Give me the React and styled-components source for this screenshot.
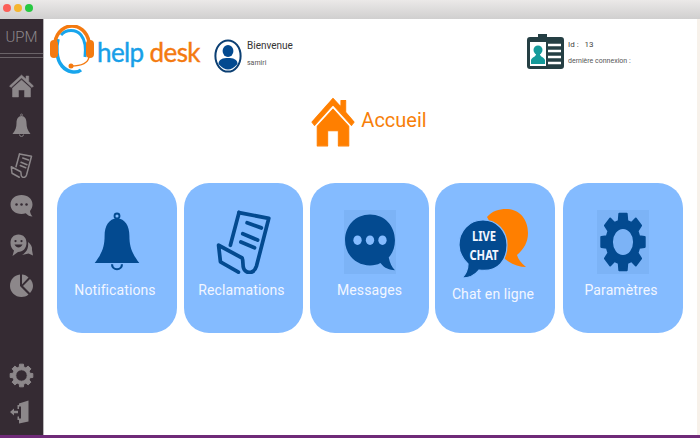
import React from "react";
import styled, { createGlobalStyle } from "styled-components";

const GlobalStyle = createGlobalStyle`
  html, body {
    margin: 0;
    padding: 0;
    background: #fff;
    font-family: "Roboto", "Liberation Sans", sans-serif;
  }
`;

const Desktop = styled.div`
  width: 700px;
  height: 438px;
  overflow: hidden;
  display: flex;
  flex-direction: column;
  background: #f7f1ea;
  border-bottom: 3px solid #6f2a78;
  box-sizing: border-box;
  padding-right: 3px;
`;
const TitleBar = styled.div`
  height: 19px;
  flex: none;
  display: flex;
  align-items: center;
  gap: 3px;
  box-sizing: border-box;
  padding: 0 0 3px 3px;
  margin-right: -3px;
  background: linear-gradient(#ebe9e8, #d0cfcf);
`;
const Dot = styled.span`
  width: 8px;
  height: 8px;
  border-radius: 50%;
  background: ${(p) => p.color};
`;
const Body = styled.div`
  flex: 1;
  display: flex;
  min-height: 0;
`;
const Sidebar = styled.div`
  width: 43px;
  flex: none;
  display: flex;
  flex-direction: column;
  align-items: center;
  background: #352b33;
  border-right: 1px solid #b9b7b9;
`;
const Brand = styled.div`
  height: 34px;
  line-height: 36px;
  font-size: 15px;
  font-weight: 300;
  color: #8d888b;
`;
const Rule = styled.div`
  width: 100%;
  height: 1px;
  margin-bottom: 3px;
  background: #6a6368;
`;
const NavList = styled.div`
  display: flex;
  flex-direction: column;
  align-items: center;
  gap: 15px;
  margin-top: 12px;
`;
const NavBottom = styled(NavList)`
  margin-top: auto;
  gap: 11px;
  padding-bottom: 11px;
`;
const NavIcon = styled.svg`
  width: 25px;
  height: 25px;
  display: block;
  color: #8c878a;
`;
const Main = styled.div`
  flex: 1;
  display: flex;
  flex-direction: column;
  background: #fff;
`;
const Header = styled.div`
  height: 56px;
  flex: none;
  display: flex;
  align-items: center;
  padding-left: 6px;
`;
const LogoMark = styled.svg`
  width: 44px;
  height: 50px;
  flex: none;
  margin-top: 6px;
`;
const LogoText = styled.div`
  width: 117px;
  margin-left: 3px;
  font-family: "Lato", sans-serif;
  font-size: 26px;
  line-height: 32px;
  letter-spacing: -0.6px;
  -webkit-text-stroke: 0.4px currentColor;
  white-space: nowrap;
  padding-top: 14px;
  box-sizing: border-box;
  height: 50px;
`;
const LogoWord = styled.span`
  color: ${(p) => p.color};
`;
const Avatar = styled.svg`
  width: 29px;
  height: 34px;
  flex: none;
  margin-top: 17px;
`;
const Welcome = styled.div`
  margin-left: 4px;
  width: 280px;
  display: flex;
  flex-direction: column;
  gap: 7px;
  margin-top: 13px;
  color: #333;
`;
const WelcomeName = styled.span`
  font-size: 10px;
  line-height: 12px;
`;
const SmallText = styled.span`
  font-size: 7px;
  line-height: 9px;
  color: #555;
`;
const IdCard = styled.svg`
  width: 37px;
  height: 35px;
  flex: none;
  margin-top: 8px;
`;
const IdInfo = styled.div`
  margin-left: 4px;
  display: flex;
  flex-direction: column;
  gap: 8px;
  margin-top: 12px;
`;
const IdLine = styled.span`
  font-size: 8px;
  line-height: 9px;
  color: #444;
  white-space: pre;
`;
const PageTitle = styled.div`
  display: flex;
  align-items: flex-start;
  justify-content: center;
  gap: 6px;
  height: 108px;
  flex: none;
  box-sizing: border-box;
  padding: 19px 3px 0 0;
  color: #f77f0a;
  font-size: 20px;
  line-height: 52px;
`;
const TitleIcon = styled.svg`
  width: 44px;
  height: 54px;
  flex: none;
  color: #ff7f00;
`;
const Cards = styled.div`
  display: flex;
  padding-left: 13px;
`;
const Card = styled.div`
  width: ${(p) => p.$w}px;
  height: 150px;
  flex: none;
  margin-left: ${(p) => p.$gap}px;
  display: flex;
  flex-direction: column;
  align-items: center;
  box-sizing: border-box;
  padding-top: 27px;
  background: #84bbff;
  border-radius: 25px;
`;
const CardIcon = styled.div`
  width: ${(p) => p.$w}px;
  height: ${(p) => p.$h}px;
  flex: none;
  display: flex;
  align-items: center;
  justify-content: center;
  background: ${(p) => (p.$shade ? "#7cb3f6" : "transparent")};
`;
const CardSvg = styled.svg`
  width: ${(p) => p.$w}px;
  height: ${(p) => p.$h}px;
  display: block;
  color: #034a90;
`;
const CardLabel = styled.div`
  margin-top: 7px;
  padding-right: ${(p) => p.$nudge || 0}px;
  font-size: 14px;
  line-height: 18px;
  letter-spacing: 0.1px;
  color: #f2f6ff;
  white-space: nowrap;
`;

const gearPath = () => {
  const teeth = 8;
  let d = "";
  for (let i = 0; i < teeth; i++) {
    const a = (i / teeth) * Math.PI * 2 - Math.PI / 2;
    const pts = [
      [35, -0.26],
      [46, -0.17],
      [46, 0.17],
      [35, 0.26],
    ];
    pts.forEach(([r, o], j) => {
      const x = (50 + r * Math.cos(a + o)).toFixed(1);
      const y = (50 + r * Math.sin(a + o)).toFixed(1);
      d += `${i === 0 && j === 0 ? "M" : "L"}${x} ${y} `;
    });
  }
  return d + "Z M50 27 A23 23 0 1 0 50 73 A23 23 0 1 0 50 27 Z";
};

const HomeShape = () => (
  <path
    fill="currentColor"
    stroke="currentColor"
    strokeWidth="2"
    strokeLinejoin="round"
    d="M50 8 L68 24 V12 H79 V34 L98 52 L92 58 L50 20 L8 58 L2 52 Z M50 28 L86 60 V96 H62 V68 H38 V96 H14 V60 Z"
  />
);
const BellShape = () => (
  <g fill="currentColor">
    <path d="M50 12 C37 12 30 24 30 40 C30 58 26 68 14 84 H86 C74 68 70 58 70 40 C70 24 63 12 50 12 Z" />
    <circle cx="50" cy="8" r="4" fill="none" stroke="currentColor" strokeWidth="3" />
    <path d="M42 86 A8 8 0 0 0 58 86" fill="none" stroke="currentColor" strokeWidth="3.5" />
  </g>
);
const ReclamShape = () => (
  <g fill="none" stroke="currentColor" strokeWidth="6" strokeLinecap="round" strokeLinejoin="round">
    <path d="M42 4 L90 13 L70 88 C67 98 58 100 52 95 C46 90 50 82 47 75 L9 55 L12 81 L41 97" />
    <path d="M42 4 L28 55" />
    <path d="M55 20 L78 28 M48 37 L72 47 M45 50 L67 59" />
  </g>
);
const BubbleShape = () => (
  <g>
    <path
      fill="currentColor"
      d="M50 4 C22 4 2 23 2 47 C2 71 23 89 50 89 C58 89 64 88 70 85 C78 94 88 97 98 97 C92 92 88 85 86 76 C94 68 98 58 98 47 C98 23 78 4 50 4 Z"
    />
    <g fill="#84bbff">
      <circle cx="26" cy="47" r="8" />
      <circle cx="50" cy="47" r="8" />
      <circle cx="74" cy="47" r="8" />
    </g>
  </g>
);
const GearShape = () => (
  <path
    fill="currentColor"
    stroke="currentColor"
    strokeWidth="4"
    strokeLinejoin="round"
    fillRule="evenodd"
    d={gearPath()}
  />
);

const navTop = [
  <HomeShape key="h" />,
  <BellShape key="b" />,
  <ReclamShape key="r" />,
  <g key="c">
    <path
      fill="currentColor"
      d="M50 8 C24 8 6 24 6 46 C6 68 24 84 50 84 C56 84 62 83 67 81 C74 89 84 94 94 94 C88 88 85 80 84 72 C90 65 94 56 94 46 C94 24 76 8 50 8 Z"
    />
    <g fill="#352b33">
      <circle cx="30" cy="46" r="5" />
      <circle cx="50" cy="46" r="5" />
      <circle cx="70" cy="46" r="5" />
    </g>
  </g>,
  <g key="s">
    <path
      fill="currentColor"
      d="M38 6 C18 6 6 20 6 40 C6 54 12 64 20 70 L14 92 L36 76 C56 76 70 60 70 40 C70 20 58 6 38 6 Z M76 36 C88 44 94 56 92 68 L96 90 L78 82 L52 88 C66 80 80 64 76 36 Z"
    />
    <circle cx="26" cy="32" r="4.5" fill="#352b33" />
    <circle cx="50" cy="32" r="4.5" fill="#352b33" />
    <path d="M22 46 C30 62 46 62 54 46 Z" fill="#352b33" />
  </g>,
  <g key="p" fill="currentColor">
    <path d="M44 6 C20 8 4 28 4 52 C4 76 24 96 50 96 C60 96 70 93 78 86 L44 52 Z" />
    <path d="M52 6 L52 46 L78 18 C70 10 62 7 52 6 Z" />
    <path d="M84 24 L56 52 L84 80 C92 70 96 62 96 52 C96 42 92 32 84 24 Z" />
  </g>,
];

const cards = [
  { label: "Notifications", w: 120, gap: 0, nudge: 4, icon: <BellShape />, iw: 62, ih: 62, box: 64 },
  { label: "Reclamations", w: 119, gap: 7, nudge: 4, icon: <ReclamShape />, iw: 62, ih: 64, box: 64 },
  { label: "Messages", w: 119, gap: 7, icon: <BubbleShape />, iw: 52, ih: 60, box: 52, shade: true },
  { label: "Chat en ligne", w: 120, gap: 6, nudge: 4, chat: true },
  { label: "Paramètres", w: 120, gap: 8, nudge: 4, icon: <GearShape />, iw: 48, ih: 62, box: 52, shade: true },
];

const LiveChat = () => (
  <svg width="72" height="70" viewBox="0 0 72 70" style={{ display: "block" }}>
    <path
      fill="#ff7f00"
      d="M28 8 C33 2 40 0 47 0 C60 0 69 10 69 24 C69 33 65 40 58 46 C59 50 62 54 67 58 C60 58 52 55 46 50 L40 30 Z"
    />
    <path
      fill="#034a90"
      stroke="#84bbff"
      strokeWidth="1.2"
      d="M24 11 C10 11 0 22 0 36 C0 44 4 50 9 55 C9 60 7 65 3 69 C10 69 16 66 20 61 C40 64 48 50 48 36 C48 22 38 11 24 11 Z"
    />
    <g
      transform="translate(25 0) scale(0.8 1)"
      fontFamily="'Noto Sans', sans-serif"
      fontWeight="700"
      fontSize="14"
      textAnchor="middle"
      fill="#f2f6ff"
    >
      <text y="32">LIVE</text>
      <text y="51">CHAT</text>
    </g>
  </svg>
);

const App = () => {
  return (
    <Desktop>
      <GlobalStyle />
      <TitleBar>
        <Dot color="#fb5f58" />
        <Dot color="#f5b52f" />
        <Dot color="#27c841" />
      </TitleBar>
      <Body>
        <Sidebar>
          <Brand>UPM</Brand>
          <Rule />
          <Rule />
          <NavList>
            {navTop.map((icon, i) => (
              <NavIcon key={i} viewBox="0 0 100 100">
                {icon}
              </NavIcon>
            ))}
          </NavList>
          <NavBottom>
            <NavIcon viewBox="0 0 100 100">
              <GearShape />
            </NavIcon>
            <NavIcon viewBox="0 0 100 100">
              <g fill="currentColor">
                <path d="M40 18 L78 6 V90 L40 98 V78 H48 V30 H40 Z" />
                <path d="M40 24 H34 V40 H40 Z M34 70 H40 V84 H34 Z" />
                <path d="M4 52 L20 38 V47 H36 V57 H20 V66 Z" />
              </g>
            </NavIcon>
          </NavBottom>
        </Sidebar>
        <Main>
          <Header>
            <LogoMark viewBox="0 0 44 50">
              <path d="M8 14 C6 22 6 34 12 41 C17 47 26 49 31 45" fill="none" stroke="#18a5ec" strokeWidth="3.5" />
              <path d="M11 10 C16 4 26 4 31 10 C35 15 36 24 35 32" fill="none" stroke="#18a5ec" strokeWidth="3" />
              <path d="M5 17 C7 6 15 1 22 1 C29 1 37 6 39 17" fill="none" stroke="#f47a10" strokeWidth="3.5" />
              <rect x="0" y="15" width="8" height="18" rx="4" fill="#f47a10" />
              <rect x="36" y="15" width="8" height="18" rx="4" fill="#f47a10" />
              <path d="M39 32 C38 38 32 41 21 41" fill="none" stroke="#f47a10" strokeWidth="1.5" />
              <circle cx="21" cy="41" r="2.5" fill="#f47a10" />
            </LogoMark>
            <LogoText>
              <LogoWord color="#189fe8">help</LogoWord>{" "}
              <LogoWord color="#f47a10">desk</LogoWord>
            </LogoText>
            <Avatar viewBox="0 0 29 34">
              <ellipse cx="14" cy="17" rx="12.6" ry="15.6" fill="#fff" stroke="#0b3f73" strokeWidth="2" />
              <ellipse cx="14" cy="12" rx="5.4" ry="6" fill="#034a90" />
              <path d="M4.5 25 C4.5 20 9 19 14 19 C19 19 23.5 20 23.5 25 C20 29 17 30.5 14 30.5 C11 30.5 8 29 4.5 25 Z" fill="#034a90" />
            </Avatar>
            <Welcome>
              <WelcomeName>Bienvenue</WelcomeName>
              <SmallText>samiri</SmallText>
            </Welcome>
            <IdCard viewBox="0 0 37 35">
              <path d="M11 0 H20 V3 H34 A3 3 0 0 1 37 6 V32 A3 3 0 0 1 34 35 H3 A3 3 0 0 1 0 32 V6 A3 3 0 0 1 3 3 H11 Z" fill="#253f44" />
              <rect x="3" y="8" width="16" height="24" fill="#fff" />
              <circle cx="11" cy="16" r="4.5" fill="#149a9a" />
              <path d="M4 30 V26 C5 23 9 23 9 20 H13 C13 23 17 23 18 26 V30 Z" fill="#149a9a" />
              <path d="M21 11 H34 M21 17 H34 M21 23 H34 M21 29 H34" stroke="#fff" strokeWidth="2.6" />
            </IdCard>
            <IdInfo>
              <IdLine>Id :   13</IdLine>
              <SmallText>dernière connexion :</SmallText>
            </IdInfo>
          </Header>
          <PageTitle>
            <TitleIcon viewBox="0 0 100 100" preserveAspectRatio="none">
              <HomeShape />
            </TitleIcon>
            Accueil
          </PageTitle>
          <Cards>
            {cards.map((c) => (
              <Card key={c.label} $w={c.w} $gap={c.gap}>
                <CardIcon
                  $w={c.chat ? 72 : c.box}
                  $h={c.chat ? 68 : 64}
                  $shade={c.shade}
                >
                  {c.chat ? (
                    <LiveChat />
                  ) : (
                    <CardSvg viewBox="0 0 100 100" preserveAspectRatio="none" $w={c.iw} $h={c.ih}>
                      {c.icon}
                    </CardSvg>
                  )}
                </CardIcon>
                <CardLabel $nudge={c.nudge}>{c.label}</CardLabel>
              </Card>
            ))}
          </Cards>
        </Main>
      </Body>
    </Desktop>
  );
};

export default App;
